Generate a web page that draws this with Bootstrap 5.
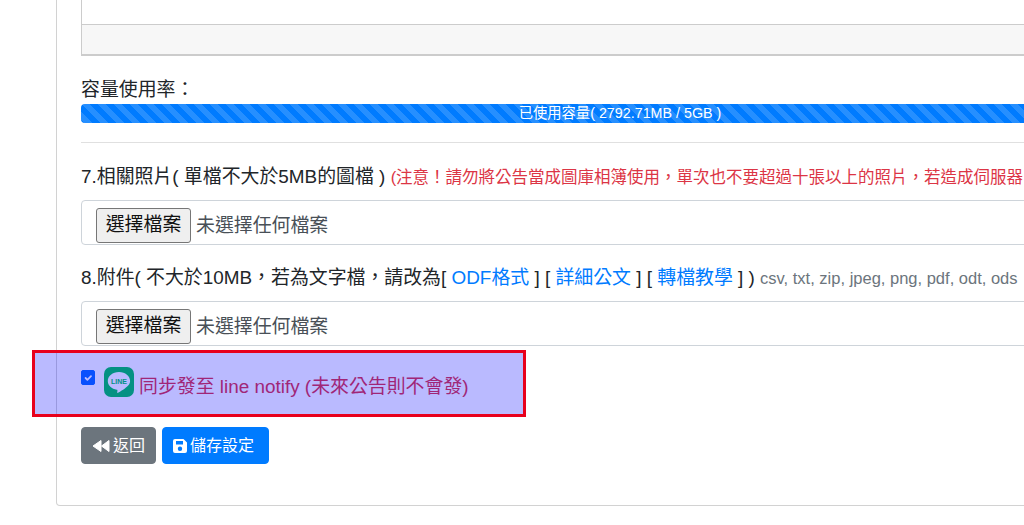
<!DOCTYPE html>
<html lang="zh-Hant">
<head>
    <meta charset="UTF-8">
    <meta name="viewport" content="width=device-width, initial-scale=1.0">
    <title>公告設定</title>
    <link href="https://cdn.jsdelivr.net/npm/bootstrap@5.3.0/dist/css/bootstrap.min.css" rel="stylesheet">
    <style>
        html, body { height: 525px; overflow: hidden; }
        body {
            font-family: "Liberation Sans", "Noto Sans CJK TC", sans-serif;
            font-size: 18.9px;
            line-height: 27px;
            color: #212529;
            background: #fff;
        }
        a { color: #007bff; text-decoration: none; }
        .page-wrap { width: 1128px; margin: -30px 0 0 56px; }
        .form-card { border-radius: 4px; padding: 0 24px 42px; height: 536px; }
        .form-card > * { flex: none; }
        .editor-box { border: 1px solid #ccc; border-bottom-width: 2px; height: 85px; display: flex; flex-direction: column; justify-content: flex-end; }
        .editor-foot { height: 30px; background: #f7f7f7; border-top: 1px solid #ccc; }
        .usage-label { margin-top: 20px; }
        .usage-bar { height: 19px; margin-top: 1px; border-radius: 4px; font-size: 14.3px; background: #e9ecef; }
        .usage-bar .progress-bar { background-color: #007bff; }
        .form-card hr { margin: 19px 0 0; border-color: #000; opacity: .12; }
        .field-label { height: 27px; margin-top: 20px; white-space: nowrap; }
        .field-label.second { margin-top: 19px; }
        .note-red { color: #dc3545; font-size: 16.5px; }
        .note-grey { color: #6c757d; font-size: 16.5px; }
        .file-box {
            height: 45px; margin-top: 10px; padding: 7px 14px 0;
            display: flex; align-items: flex-start; gap: 5px;
            color: #495057; font-size: 18.9px; border-color: #ced4da; border-radius: 4px;
        }
        .file-box span { line-height: 35px; }
        .file-btn {
            height: 35px; width: 95px; padding: 0;
            font-size: 18.9px; color: #111;
            background: #efefef; border: 1px solid #767676; border-radius: 3px;
        }
        .line-row { position: relative; height: 67px; margin-top: 4px; padding-top: 20px; color: #dc3545; font-size: 18.9px; }
        .line-row .form-check-input { width: 14px; height: 15px; margin: 0 9px 0 0; flex: none; background-color: #0d6efd; border-color: #0d6efd; border-radius: 2px; opacity: 1; }
        .line-logo { width: 30px; height: 30px; margin: -3px 5px 0 0; flex: none; }
        .line-text { margin-top: 3px; line-height: 27px; white-space: nowrap; }
        .mark-overlay {
            position: absolute; left: -49px; top: 0; width: 494px; height: 67px;
            background: rgba(0, 0, 255, .27); border: 3px solid #e8001c;
        }
        .action-row { margin-top: 10px; gap: 6px; }
        .action-row .btn { font-size: 16px; height: 37px; padding: 0 10px; line-height: 35px; border-radius: 4px; display: inline-flex; align-items: center; gap: 3px; }
        .btn-back { background: #6c757d; border-color: #6c757d; color: #fff; width: 75px; }
        .btn-store { background: #007bff; border-color: #007bff; color: #fff; width: 107px; }
    </style>
</head>
<body>
    <div class="page-wrap">
        <div class="card form-card">
            <div class="editor-box">
                <div class="editor-foot"></div>
            </div>

            <div class="usage-label">容量使用率：</div>
            <div class="progress usage-bar">
                <div class="progress-bar progress-bar-striped" role="progressbar" style="width: 100%">已使用容量( 2792.71MB / 5GB )</div>
            </div>
            <hr>

            <div class="field-label">7.相關照片( 單檔不大於5MB的圖檔 ) <span class="note-red">(注意！請勿將公告當成圖庫相簿使用，單次也不要超過十張以上的照片，若造成伺服器</span></div>
            <div class="form-control file-box">
                <button type="button" class="file-btn">選擇檔案</button>
                <span>未選擇任何檔案</span>
            </div>

            <div class="field-label second">8.附件( 不大於10MB，若為文字檔，請改為[ <a href="#">ODF格式</a> ] [ <a href="#">詳細公文</a> ] [ <a href="#">轉檔教學</a> ] ) <span class="note-grey">csv, txt, zip, jpeg, png, pdf, odt, ods</span></div>
            <div class="form-control file-box">
                <button type="button" class="file-btn">選擇檔案</button>
                <span>未選擇任何檔案</span>
            </div>

            <div class="line-row d-flex align-items-start">
                <input class="form-check-input" type="checkbox" checked>
                <svg class="line-logo" viewBox="0 0 30 30">
                    <rect width="30" height="30" rx="7" fill="#06c755"/>
                    <path d="M15 5C8.6 5 3.8 9 3.8 14c0 4.5 3.8 8 9 8.8.6.1.7.4.6 1l-.2 1.6c0 .5.3.7.8.4 2.5-1.4 7.8-4.6 10.2-7.3 1.3-1.4 1.9-2.9 1.9-4.5C26.1 9 21.4 5 15 5z" fill="#fff"/>
                    <text x="15" y="16.5" text-anchor="middle" font-family="Liberation Sans" font-size="7" font-weight="700" fill="#06c755">LINE</text>
                </svg>
                <span class="line-text">同步發至 line notify (未來公告則不會發)</span>
                <div class="mark-overlay"></div>
            </div>

            <div class="action-row d-flex">
                <a href="#" class="btn btn-back">
                    <svg width="18" height="14" viewBox="0 0 18 14"><path d="M9 1.5v11L1 7z M17 1.5v11L9.5 7z" fill="#fff" stroke="#fff" stroke-linejoin="round"/></svg>返回
                </a>
                <a href="#" class="btn btn-store">
                    <svg width="14" height="14" viewBox="0 0 14 14"><path fill-rule="evenodd" d="M2 0h8.5L14 3.5V12a2 2 0 0 1-2 2H2a2 2 0 0 1-2-2V2a2 2 0 0 1 2-2z M3 2v3.5h7V2z M7 7.5a2.2 2.2 0 1 0 0 4.4 2.2 2.2 0 0 0 0-4.4z" fill="#fff"/></svg>儲存設定
                </a>
            </div>
        </div>
    </div>
    <script src="https://cdn.jsdelivr.net/npm/bootstrap@5.3.0/dist/js/bootstrap.bundle.min.js"></script>
</body>
</html>
